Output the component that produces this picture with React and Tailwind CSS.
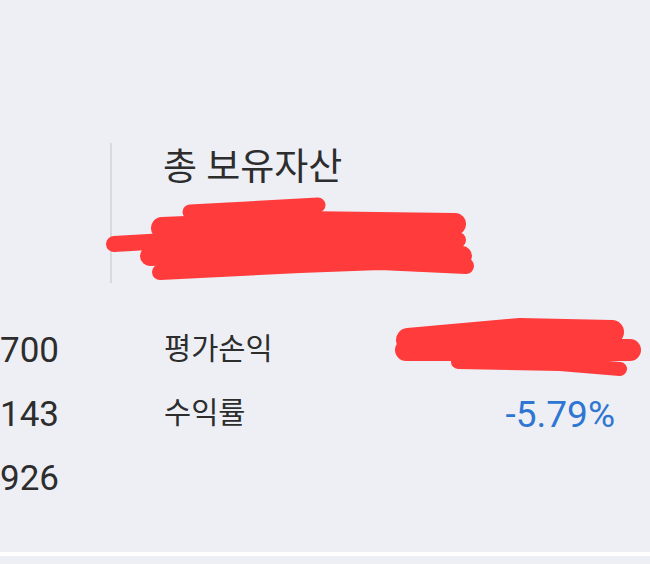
import React from 'react'

const rows = [
  { left: "700", label: "평가손익", value: null },
  { left: "143", label: "수익률", value: "-5.79%" },
  { left: "926", label: null, value: null },
]

function Scribble({ className, strokes, width, height }) {
  return (
    <svg className={className} width={width} height={height} viewBox={`0 0 ${width} ${height}`}>
      {strokes.map((s, i) => (
        <path key={i} d={s.d} stroke="#ff3b3b" strokeWidth={s.w} strokeLinecap="round" strokeLinejoin="round" fill="none" />
      ))}
    </svg>
  )
}

function App() {
  return (
    <div className="relative w-[650px] h-[564px] bg-[#eeeff4] overflow-hidden font-['Roboto','Noto_Sans_CJK_KR',sans-serif] text-[#2d2d2d]">
      <div className="h-[143px]" />

      {/* header */}
      <div className="flex h-[140px]">
        <div className="w-[110px]" />
        <div className="flex-1 border-l-2 border-[#d9d9dd] pl-[51px]">
          <h2 className="text-[37px] leading-[44px] pt-[3px]">총 보유자산</h2>
        </div>
      </div>

      <div className="h-[35px]" />

      {/* rows */}
      <div className="flex flex-col">
        {rows.map((r, i) => (
          <div key={i} className="flex h-16 items-center">
            <div className="w-[58px] text-right text-[35px] leading-none whitespace-nowrap">{r.left}</div>
            <div className="flex-1 flex items-center justify-between pl-[106px] pr-[35px]">
              <span className="text-[29.5px] leading-none">{r.label}</span>
              {r.value && <span className="text-[37px] leading-none text-[#2f76d2]">{r.value}</span>}
            </div>
          </div>
        ))}
      </div>

      <div className="absolute left-0 right-0 top-[552px] h-[4px] bg-white" />

      {/* redactions */}
      <Scribble
        className="absolute left-0 top-0 pointer-events-none"
        width={650}
        height={564}
        strokes={[
          { d: "M190,212 L318,205", w: 15 },
          { d: "M162,228 L300,222 L455,224", w: 22 },
          { d: "M114,244 L200,239 L300,237 L458,240", w: 16 },
          { d: "M150,256 L300,250 L462,256", w: 20 },
          { d: "M160,272 L300,265 L380,262 L466,266", w: 16 },
          { d: "M408,340 L520,330 L612,332", w: 24 },
          { d: "M406,350 L630,350", w: 22 },
          { d: "M458,362 L560,364 L620,369", w: 14 },
        ]}
      />
    </div>
  )
}

export default App
